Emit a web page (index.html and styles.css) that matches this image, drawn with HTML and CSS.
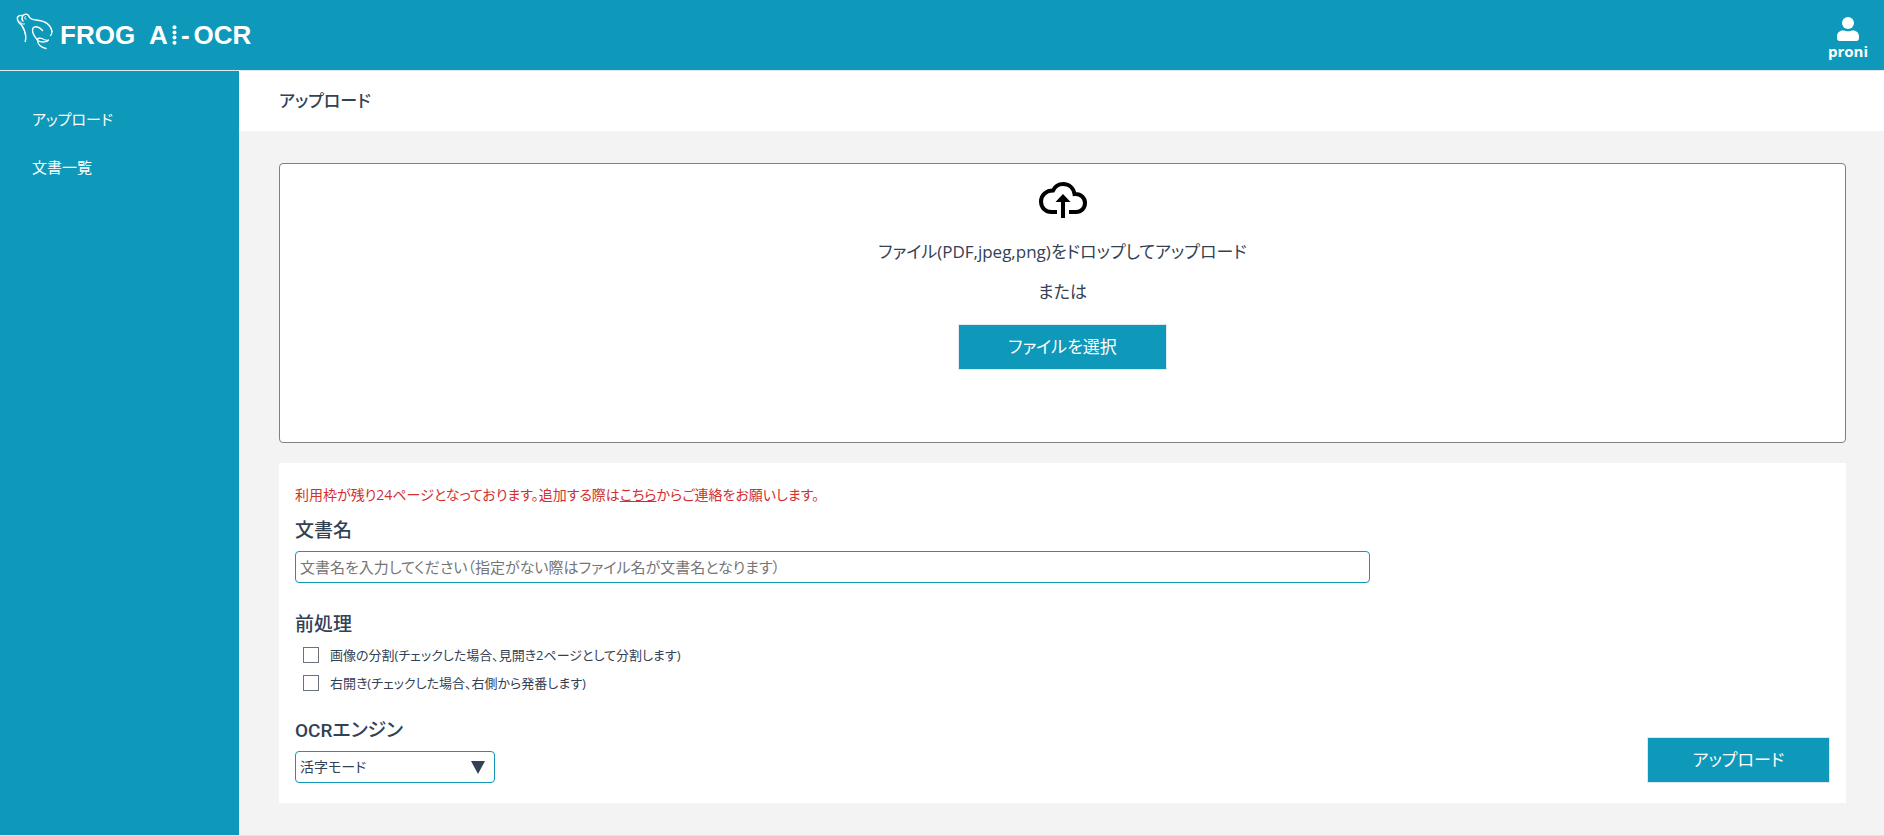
FILE: index.html
```html
<!DOCTYPE html>
<html lang="ja">
<head>
<meta charset="utf-8">
<meta name="viewport" content="width=device-width, initial-scale=1">
<title>FROG AI-OCR</title>
<link rel="stylesheet" href="styles.css">
</head>
<body>
<header class="header">
  <div class="logo">
    <svg class="logo-frog" width="38" height="38" viewBox="0 0 38 38" fill="none" stroke="#fff" stroke-linecap="round" stroke-linejoin="round" aria-hidden="true">
      <path stroke-width="1.5" d="M7 9C5.500 7.500 5.500 4 8 2.600C10 1.600 12.500 2.300 13.300 5C14.500 7.400 17 7.800 20 8C28 8.600 34.500 12 36 19.500"/>
      <path stroke-width="1.2" d="M36 19.500C36 21.500 35.500 22.500 34.500 23.500"/>
      <path stroke-width="1.4" d="M6 3.500C3 3 1.200 4.500 1.300 6.500C1.500 9 3.500 11.500 5.500 13C7.500 16 9.500 20 9.800 24.500C9.900 26.500 9.700 28 9.200 29.500"/>
      <path stroke-width="1" d="M4 9.500C5 11.500 6.500 12.500 8.500 12M9.500 4.500C8 5.500 8.500 7.500 10 7.200"/>
      <path stroke-width="1.4" d="M26.500 18.500C24 15 19 13.500 17 16C15.500 19 18 24 21 27.500"/>
      <path stroke-width="1.3" d="M21.500 28.500C21 26 24 25.500 27 27C29 28 31.500 28.500 32.500 28C31 30 26 31 21.500 28.500C21.500 32 25 35.500 30 36.500"/>
    </svg>
    <span class="logo-text">FROG</span>
    <span class="logo-text logo-ai">A</span>
    <svg class="logo-dots" width="5" height="20" viewBox="0 0 5 20" fill="#fff" aria-hidden="true">
      <circle cx="2.500" cy="2.200" r="2"/><circle cx="2.500" cy="7.400" r="2"/><circle cx="2.500" cy="12.600" r="2"/><circle cx="2.500" cy="17.800" r="2"/>
    </svg>
    <span class="logo-text">-</span>
    <span class="logo-text">OCR</span>
  </div>
  <button class="user" type="button">
    <svg width="22" height="24" viewBox="0 0 22 24" fill="#fff" aria-hidden="true">
      <circle cx="11" cy="6" r="6"/>
      <path d="M0 21V19.500C0 16 2.500 13.500 6 13.500C8 13.500 9 14.300 11 14.300S14 13.500 16 13.500C19.500 13.500 22 16 22 19.500V21C22 23 21 24 19.500 24H2.500C1 24 0 23 0 21Z"/>
    </svg>
    <span>proni</span>
  </button>
</header>
<div class="body">
  <nav class="sidebar">
    <a href="#">アップロード</a>
    <a href="#">文書一覧</a>
  </nav>
  <main class="main">
    <h1 class="page-title">アップロード</h1>
    <div class="content">
      <section class="dropzone">
        <svg class="cloud" width="48" height="36" viewBox="0 0 48 36" aria-hidden="true">
          <path d="M18 30H12.500C6.500 30 2 25.700 2 19.500C2 12.800 7.500 8.500 14 8.500C16 4.500 19.500 2 24 2C30 2 34.500 6 35.500 12C42 11.500 46 16 46 21C46 26.500 42 30 37 30H30" fill="none" stroke="#000" stroke-width="4"/>
          <path d="M24 12L31.500 20H26V36H22V20H16.500Z"/>
        </svg>
        <p>ファイル(PDF,jpeg,png)をドロップしてアップロード</p>
        <p>または</p>
        <button class="button button-select" type="button">ファイルを選択</button>
      </section>
      <form class="panel">
        <div class="fields">
          <p class="notice">利用枠が残り24ページとなっております。追加する際は<a href="#">こちら</a>からご連絡をお願いします。</p>
          <label class="heading" for="doc-name">文書名</label>
          <input class="control doc-name" id="doc-name" type="text" placeholder="文書名を入力してください（指定がない際はファイル名が文書名となります）">
          <fieldset class="group">
            <legend class="heading">前処理</legend>
            <label class="check"><input type="checkbox"><span>画像の分割(チェックした場合、見開き2ページとして分割します)</span></label>
            <label class="check"><input type="checkbox"><span>右開き(チェックした場合、右側から発番します)</span></label>
          </fieldset>
          <label class="heading" for="engine">OCRエンジン</label>
          <div class="select">
            <select class="control" id="engine"><option>活字モード</option></select>
            <svg width="14" height="13" viewBox="0 0 14 13" fill="#334155" aria-hidden="true"><path d="M0 0H14L7 13Z"/></svg>
          </div>
        </div>
        <button class="button button-upload" type="button">アップロード</button>
      </form>
    </div>
  </main>
</div>
</body>
</html>
```
FILE: styles.css
```css
* { box-sizing: border-box; }

body {
  display: flex;
  flex-direction: column;
  min-height: 100vh;
  margin: 0;
  border-bottom: 1px solid #e2e2e2;
  color: #334155;
  background: #f3f3f3;
  font-family: "Open Sans", "Noto Sans CJK JP", sans-serif;
  font-size: 14px;
  line-height: 24px;
  font-feature-settings: "palt";
}

p, h1 { margin: 0; }

button, input, select {
  font: inherit;
  font-feature-settings: inherit;
  color: inherit;
}

.header {
  display: flex;
  justify-content: space-between;
  align-items: center;
  height: 71px;
  padding: 0 16px;
  border-bottom: 1px solid #e2e8f0;
  color: #fff;
  background: #0e98ba;
}

.logo {
  display: flex;
  align-items: center;
  gap: 4px;
}

.logo-frog { margin: 0 2px 8px 0; }

.logo-text {
  font-family: "Liberation Sans", sans-serif;
  font-size: 26px;
  font-weight: 700;
  line-height: 32px;
}

.logo-ai { margin-left: 10px; }

.user {
  display: flex;
  flex-direction: column;
  align-items: center;
  padding: 8px 0 0;
  border: 0;
  background: none;
  color: #fff;
  font-size: 15px;
  font-weight: 700;
  line-height: 20px;
}

.body {
  display: flex;
  flex: 1;
}

.sidebar {
  display: flex;
  flex-direction: column;
  gap: 24px;
  width: 239px;
  padding: 36px 32px;
  background: #0e98ba;
  font-size: 15px;
}

.sidebar a {
  color: #fff;
  text-decoration: none;
}

.main { flex: 1; }

.page-title {
  padding: 16px 40px;
  background: #fff;
  font-size: 17px;
  font-weight: 500;
  line-height: 28px;
}

.content {
  display: flex;
  flex-direction: column;
  gap: 20px;
  padding: 32px 38px 32px 40px;
}

.dropzone {
  display: flex;
  flex-direction: column;
  align-items: center;
  gap: 12px;
  padding: 18px 16px 72px;
  border: 1px solid #808080;
  border-radius: 4px;
  background: #fff;
  font-size: 17px;
  line-height: 28px;
}

.cloud { margin-bottom: 8px; }

.button {
  height: 46px;
  border: 1px solid #e2e8f0;
  color: #fff;
  background: #0e98ba;
  font-size: 17px;
  line-height: 28px;
}

.button-select {
  width: 209px;
  margin-top: 6px;
}

.button-upload { width: 183px; }

.panel {
  display: flex;
  justify-content: space-between;
  align-items: flex-end;
  padding: 20px 16px;
  background: #fff;
}

.fields {
  display: flex;
  flex-direction: column;
  width: 70%;
}

.notice { color: #d32f2f; }

.notice a { color: inherit; }

.heading {
  padding: 10px 0 6px;
  font-family: Roboto, "Noto Sans CJK JP", sans-serif;
  font-size: 19px;
  font-weight: 500;
  line-height: 28px;
}

.control {
  height: 32px;
  padding: 0 4px;
  border: 1px solid #0e98ba;
  border-radius: 4px;
  background: #fff;
}

.doc-name { font-size: 15px; }

.doc-name::placeholder {
  color: #757575;
  opacity: 1;
}

.group {
  margin: 20px 0 10px;
  padding: 0;
  border: 0;
}

.group .heading { padding: 8px 0 2px; }

.check {
  display: flex;
  align-items: center;
  gap: 11px;
  height: 28px;
  padding-left: 8px;
  font-size: 13px;
}

.check input {
  appearance: none;
  width: 16px;
  height: 16px;
  margin: 0;
  border: 1px solid #6b7280;
  background: #fff;
}

.select {
  display: grid;
  align-items: center;
  width: 200px;
}

.select select,
.select svg { grid-area: 1 / 1; }

.select select { appearance: none; }

.select svg {
  justify-self: end;
  margin-right: 10px;
  pointer-events: none;
}
```
